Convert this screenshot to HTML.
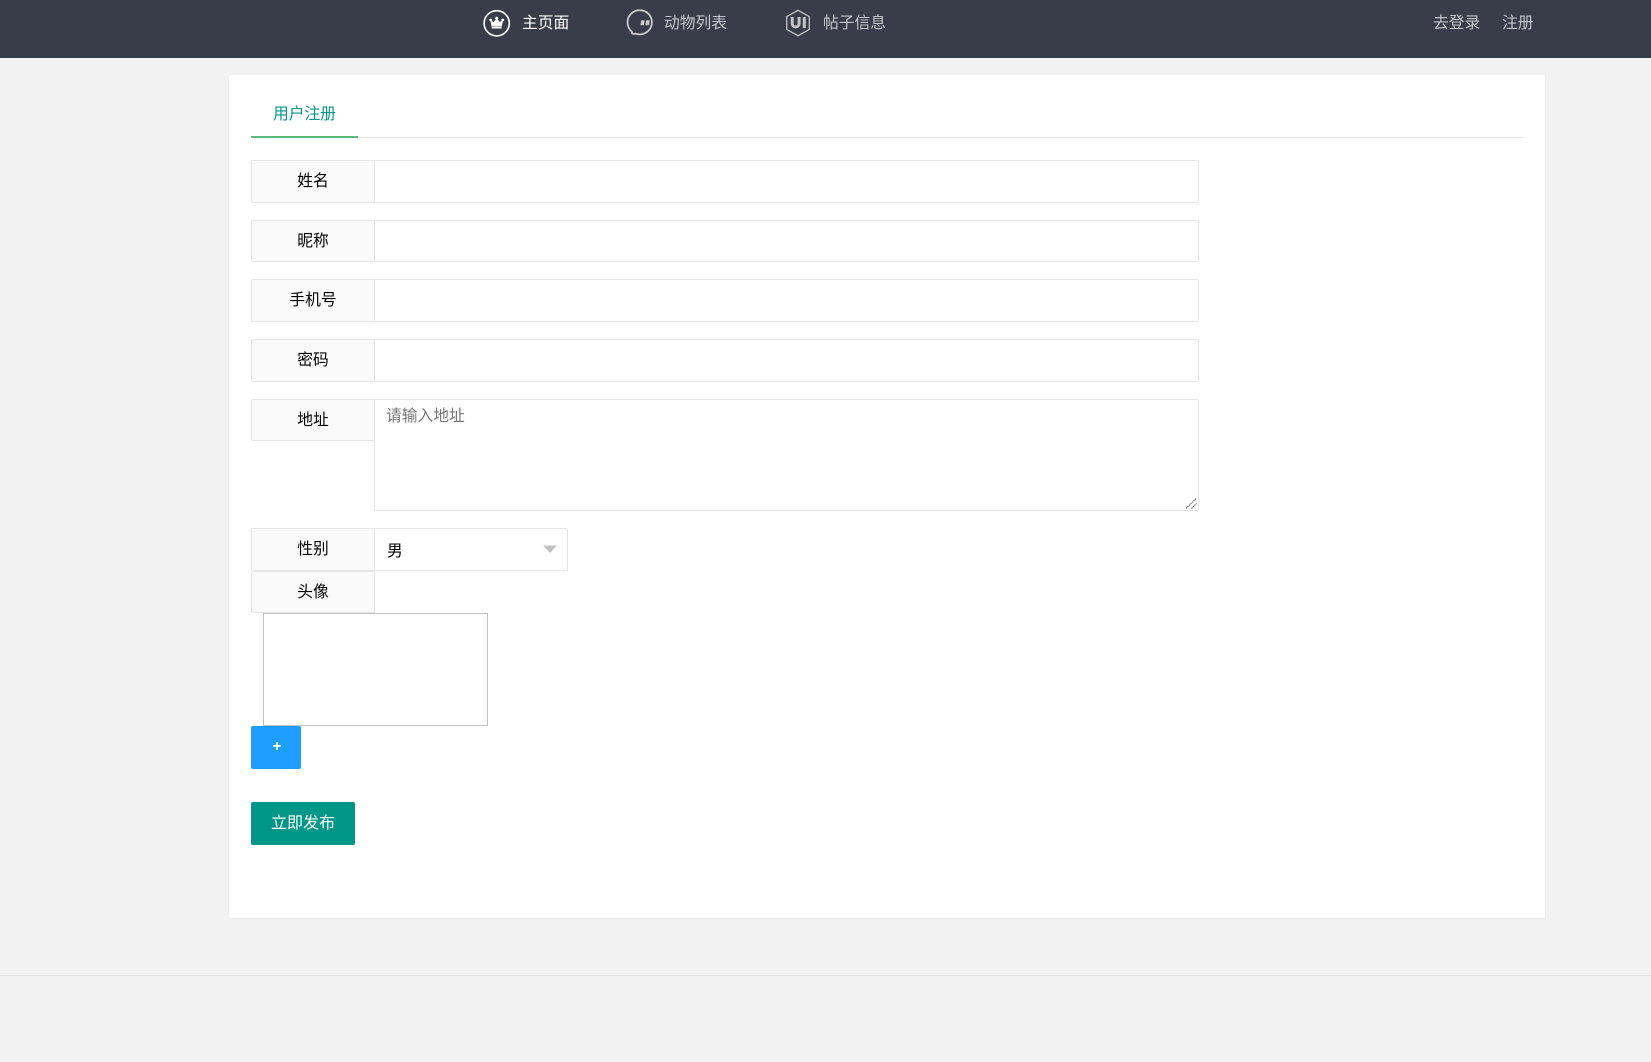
<!DOCTYPE html>
<html lang="zh-CN">
<head>
<meta charset="utf-8">
<title>用户注册</title>
<style>
html,body{margin:0;padding:0;width:1651px;height:1062px;overflow:hidden;background:#f2f2f2;}
body{position:relative;font-family:"Liberation Sans","WenQuanYi Zen Hei","Noto Sans CJK SC",sans-serif;font-size:15.75px;color:#000;}
*{box-sizing:border-box;}
.abs,.t{position:absolute;}
.t{white-space:nowrap;line-height:22px;height:22px;}
.hdr{position:absolute;left:0;top:0;width:1651px;height:58px;background:#393d49;}
.nav{color:rgba(255,255,255,.7);}
.card{position:absolute;left:229px;top:75px;width:1316px;height:843px;background:#fff;border-radius:2px;box-shadow:0 1px 2px rgba(0,0,0,.05);}
.lbl{position:absolute;left:251px;width:124px;background:#fafafa;border:1px solid #e6e6e6;border-radius:2px 0 0 2px;text-align:center;}
.inp{position:absolute;left:374px;width:825px;background:#fff;border:1px solid #e6e6e6;border-radius:0 2px 2px 0;padding:0;margin:0;outline:none;display:block;}
textarea.inp{font:inherit;padding:5px 11px;line-height:22px;resize:none;color:#000;}
textarea.inp::placeholder{color:#757575;opacity:1;}
</style>
</head>
<body>
<div class="hdr"></div>

<svg class="abs" style="left:482px;top:9px" width="30" height="28" viewBox="0 0 30 28">
  <circle cx="14.700" cy="14.300" r="12.600" fill="none" stroke="#fff" stroke-width="1.600"/>
  <path d="M8.800 11.500l2.800 2 3.100-3.800 3.100 3.800 2.800-2-1 5.800H9.800z" fill="#fff" stroke="#fff" stroke-width=".6" stroke-linejoin="round"/>
  <circle cx="8.700" cy="11" r="1.400" fill="#fff"/><circle cx="14.700" cy="9.300" r="1.500" fill="#fff"/><circle cx="20.700" cy="11" r="1.400" fill="#fff"/>
  <rect x="9.800" y="18" width="9.800" height="1.500" fill="#fff"/>
</svg>
<div class="t" style="left:522px;top:13px;color:#fff">主页面</div>

<svg class="abs" style="left:625px;top:9px" width="30" height="30" viewBox="0 0 30 30">
  <path d="M6.600 22.400C4 20.200 2.500 17 2.500 13.300 2.500 6.500 8 1.200 14.700 1.200S26.900 6.500 26.900 13.300 21.400 25.400 14.700 25.400c-1.500 0-3-.3-4.400-.8-1 .3-2.300.3-3-.1-.9-.5-.6-1.500.4-1.700" fill="none" stroke="#c9c9c9" stroke-width="1.800"/>
  <path d="M16.700 11.300h2.200c.5 0 .8.300.7.800l-.5 3.400c-.1.500-.4.800-.9.800h-2c-.5 0-.8-.3-.7-.8l.5-3.400c.1-.5.300-.8.700-.8zM21.700 11.300h2.200c.5 0 .8.300.7.800l-.5 3.400c-.1.500-.4.800-.9.800h-2c-.5 0-.8-.3-.7-.8l.5-3.400c.1-.5.300-.8.700-.8z" fill="#c9c9c9"/>
</svg>
<div class="t nav" style="left:664px;top:13px">动物列表</div>

<svg class="abs" style="left:784px;top:9px" width="28" height="28" viewBox="0 0 28 28">
  <path d="M14 1.300l11.300 6.300v12.800L14 26.700 2.700 20.400V7.600z" fill="none" stroke="#c4c4c4" stroke-width="1.300"/>
  <path d="M8.200 8v6.500a3.450 3.450 0 0 0 6.900 0V8" fill="none" stroke="#c4c4c4" stroke-width="3"/>
  <rect x="18.800" y="8" width="3" height="11" fill="#c4c4c4"/>
</svg>
<div class="t nav" style="left:823px;top:13px">帖子信息</div>

<div class="t nav" style="left:1433px;top:13px">去登录</div>
<div class="t nav" style="left:1502px;top:13px">注册</div>

<div class="card"></div>

<div class="abs" style="left:251px;top:137px;width:1272px;height:1px;background:#e6e6e6"></div>
<div class="abs" style="left:251px;top:136px;width:107px;height:2px;background:#5fb878"></div>
<div class="t" style="left:273px;top:104px;color:#009688">用户注册</div>

<div class="lbl" style="top:160px;height:43px;line-height:42px">姓名</div>
<input class="inp" style="top:160px;height:43px" type="text" aria-label="姓名">

<div class="lbl" style="top:220px;height:42px;line-height:41px">昵称</div>
<input class="inp" style="top:220px;height:42px" type="text" aria-label="昵称">

<div class="lbl" style="top:279px;height:43px;line-height:42px">手机号</div>
<input class="inp" style="top:279px;height:43px" type="text" aria-label="手机号">

<div class="lbl" style="top:339px;height:43px;line-height:42px">密码</div>
<input class="inp" style="top:339px;height:43px" type="text" aria-label="密码">

<div class="lbl" style="top:399px;height:42px;line-height:41px">地址</div>
<textarea class="inp" style="top:399px;height:112px;padding-top:6px" placeholder="请输入地址"></textarea>
<svg class="abs" style="left:1186px;top:498px" width="11" height="11" viewBox="0 0 11 11">
  <path d="M0 10.500L10.500 0M5.500 10.500L10.500 5.500" stroke="#555" stroke-width="1" stroke-dasharray="1.400 .7" fill="none"/>
</svg>

<div class="lbl" style="top:528px;height:43px;line-height:41px">性别</div>
<div class="inp" style="top:528px;height:43px;width:194px;border-radius:0 2px 2px 0"></div>
<div class="t" style="left:387px;top:541px">男</div>
<svg class="abs" style="left:543px;top:545px" width="14" height="9" viewBox="0 0 14 9"><path d="M0 .5h14L7 8z" fill="#c2c2c2"/></svg>

<div class="lbl" style="top:571px;height:42px;line-height:41px">头像</div>

<div class="abs" style="left:263px;top:613px;width:225px;height:113px;border:1px solid #c0c0c0;background:#fff"></div>

<div class="abs" style="left:251px;top:726px;width:50px;height:43px;background:#1e9fff;border-radius:2px;color:#fff;font-size:16px;font-weight:bold;text-align:center;line-height:41px;padding-left:2px">+</div>

<div class="abs" style="left:251px;top:802px;width:104px;height:43px;background:#009688;border-radius:2px;color:#fff;text-align:center;line-height:44px;font-size:16px">立即发布</div>

<div class="abs" style="left:0;top:975px;width:1651px;height:1px;background:#e2e2e2"></div>
</body>
</html>
